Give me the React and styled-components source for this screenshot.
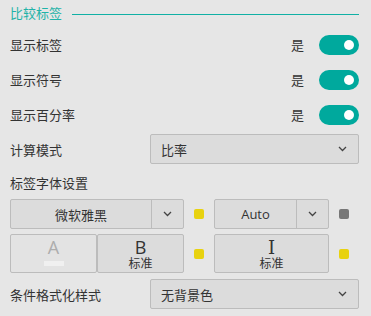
import React from 'react'
import styled, {createGlobalStyle} from 'styled-components'

const GlobalStyle = createGlobalStyle`
  html, body {
    margin: 0;
    padding: 0;
    background: #e6e6e6;
  }
  body {
    font-family: "Open Sans", "Noto Sans CJK SC", sans-serif;
    color: #333;
  }
`

const Panel = styled.div`
  width: 371px;
  padding: 0 12px 0 10px;
  box-sizing: border-box;
  display: flex;
  flex-direction: column;
`

const TitleRow = styled.div`
  height: 27px;
  display: flex;
  align-items: center;
  gap: 10px;
`

const Title = styled.span`
  font-size: 13px;
  color: #1fb3a8;
  line-height: 1;
`

const TitleLine = styled.div`
  flex: 1;
  height: 1px;
  margin-top: 2px;
  background: #11b0a5;
`

const Row = styled.div`
  height: ${p => p.h || 35}px;
  display: flex;
  align-items: center;
  justify-content: space-between;
`

const Label = styled.span`
  font-size: 13px;
  color: #333;
`

const ToggleWrap = styled.div`
  display: flex;
  align-items: center;
  gap: 15px;
`

const Yes = styled.span`
  font-size: 13px;
  color: #333;
`

const Toggle = styled.div`
  width: 40px;
  height: 20px;
  border-radius: 10px;
  background: #00a99d;
  display: flex;
  align-items: center;
  justify-content: flex-end;
  padding-right: 5px;
  box-sizing: border-box;
`

const Knob = styled.div`
  width: 10px;
  height: 10px;
  border-radius: 50%;
  background: #fff;
`

const Select = styled.div`
  width: 209px;
  height: 30px;
  box-sizing: border-box;
  border: 1px solid #bcbcbc;
  border-radius: 2px;
  background: #dcdcdc;
  display: flex;
  align-items: center;
  justify-content: space-between;
  padding: 0 11px 0 10px;
  font-size: 13px;
  color: #333;
`

const Chevron = () => (
  <svg width="9" height="6" viewBox="0 0 9 6">
    <path d="M1 1 L4.5 4.5 L8 1" fill="none" stroke="#444" strokeWidth="1.3" />
  </svg>
)

const Grid = styled.div`
  display: flex;
  align-items: center;
  margin-top: ${p => p.mt || 0}px;
`

const Combo = styled.div`
  width: ${p => p.w}px;
  height: 30px;
  box-sizing: border-box;
  border: 1px solid #bcbcbc;
  border-radius: 2px;
  background: #dcdcdc;
  display: flex;
  font-size: 13px;
  color: #333;
`

const ComboText = styled.div`
  flex: 1;
  display: flex;
  align-items: center;
  justify-content: center;
  border-right: 1px solid #bcbcbc;
`

const ComboArrow = styled.div`
  width: 31px;
  display: flex;
  align-items: center;
  justify-content: center;
`

const Swatch = styled.div`
  width: 10px;
  height: 10px;
  border-radius: 2px;
  background: ${p => p.c};
  margin: 0 10px;
`

const StyleBtn = styled.div`
  width: ${p => p.w}px;
  height: 39px;
  box-sizing: border-box;
  border: 1px solid #bcbcbc;
  border-radius: 2px;
  background: ${p => (p.light ? '#e3e3e3' : '#dcdcdc')};
  display: flex;
  flex-direction: column;
  align-items: center;
  justify-content: flex-start;
  padding-top: 4px;
`

const Glyph = styled.span`
  font-family: ${p => (p.serif ? '"DejaVu Serif", serif' : '"Open Sans", sans-serif')};
  font-size: 18px;
  line-height: 17px;
  color: ${p => p.c || '#333'};
`

const Sub = styled.span`
  font-size: 12px;
  line-height: 15px;
  color: #333;
`

const Underbar = styled.div`
  width: 20px;
  height: 5px;
  background: #f0f0f0;
  margin-top: 5px;
`

const ToggleRow = ({label}) => (
  <Row>
    <Label>{label}</Label>
    <ToggleWrap>
      <Yes>是</Yes>
      <Toggle><Knob /></Toggle>
    </ToggleWrap>
  </Row>
)

export default function App() {
  return (
    <Panel>
      <GlobalStyle />
      <TitleRow>
        <Title>比较标签</Title>
        <TitleLine />
      </TitleRow>
      <ToggleRow label="显示标签" />
      <ToggleRow label="显示符号" />
      <ToggleRow label="显示百分率" />
      <Row h={34}>
        <Label>计算模式</Label>
        <Select>比率<Chevron /></Select>
      </Row>
      <Row h={33}>
        <Label>标签字体设置</Label>
      </Row>
      <Grid>
        <Combo w={174}>
          <ComboText>微软雅黑</ComboText>
          <ComboArrow><Chevron /></ComboArrow>
        </Combo>
        <Swatch c="#e8d210" />
        <Combo w={115}>
          <ComboText>Auto</ComboText>
          <ComboArrow><Chevron /></ComboArrow>
        </Combo>
        <Swatch c="#777" />
      </Grid>
      <Grid mt={5}>
        <StyleBtn w={87} light>
          <Glyph c="#adadad">A</Glyph>
          <Underbar />
        </StyleBtn>
        <StyleBtn w={87}>
          <Glyph>B</Glyph>
          <Sub>标准</Sub>
        </StyleBtn>
        <Swatch c="#e8d210" />
        <StyleBtn w={115}>
          <Glyph serif>I</Glyph>
          <Sub>标准</Sub>
        </StyleBtn>
        <Swatch c="#e8d210" />
      </Grid>
      <Row h={42}>
        <Label>条件格式化样式</Label>
        <Select>无背景色<Chevron /></Select>
      </Row>
    </Panel>
  )
}
